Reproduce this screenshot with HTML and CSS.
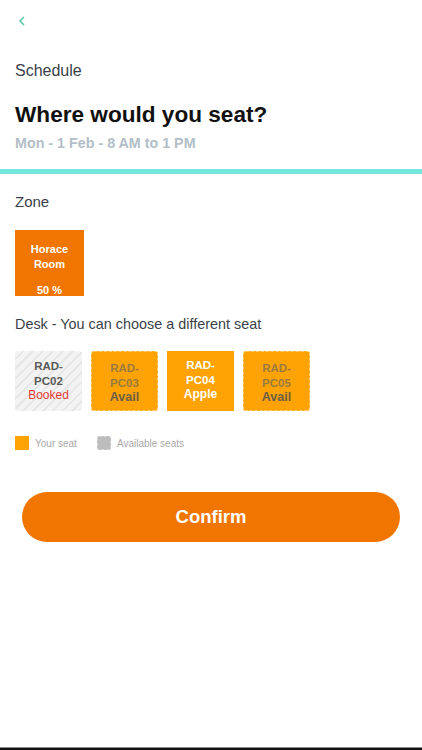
FILE: index.html
```html
<!DOCTYPE html>
<html>
<head>
<meta charset="utf-8">
<link rel="stylesheet" href="styles.css">
</head>
<body>
<div class="app">
  <header class="top">
    <div class="back">
      <svg width="8" height="10" viewBox="0 0 8 10"><path d="M6 1 L2 5 L6 9" fill="none" stroke="#5cc9ae" stroke-width="1.6"/></svg>
    </div>
    <div class="eyebrow">Schedule</div>
    <h1 class="title">Where would you seat?</h1>
    <div class="when">Mon - 1 Feb - 8 AM to 1 PM</div>
  </header>
  <div class="divider"></div>
  <main class="content">
    <div class="label">Zone</div>
    <div class="zone">
      <div class="zone-name">Horace<br>Room</div>
      <div class="zone-pct">50 %</div>
    </div>
    <div class="label desk-label">Desk - You can choose a different seat</div>
    <div class="seats">
      <div class="seat booked"><span>RAD-<br>PC02</span><span class="status">Booked</span></div>
      <div class="seat avail"><span>RAD-<br>PC03</span><span class="status">Avail</span></div>
      <div class="seat mine"><span>RAD-<br>PC04</span><span class="status">Apple</span></div>
      <div class="seat avail"><span>RAD-<br>PC05</span><span class="status">Avail</span></div>
    </div>
    <div class="legend">
      <div class="leg"><span class="sw sw-mine"></span>Your seat</div>
      <div class="leg"><span class="sw sw-avail"></span>Available seats</div>
    </div>
    <button class="confirm">Confirm</button>
  </main>
  <div class="bottom"></div>
</div>
</body>
</html>
```
FILE: styles.css
```css
* { box-sizing: border-box; }
html, body { margin: 0; padding: 0; background: #fff; }
body { font-family: "Liberation Sans", Arial, sans-serif; color: #333; }
.app { width: 422px; height: 750px; display: flex; flex-direction: column; position: relative; }
.top { padding: 15px 15px 0 15px; }
.back { height: 12px; padding-left: 3px; display: flex; align-items: flex-start; padding-top: 1px; }
.back svg { display: block; }
.eyebrow { margin-top: 35px; font-size: 16px; color: #3a3f4a; line-height: 18px; }
.title { margin: 22px 0 0 0; font-size: 22.6px; font-weight: bold; color: #111; line-height: 26px; }
.when { margin-top: 7px; font-size: 14.3px; font-weight: bold; color: #b3bec8; line-height: 16px; }
.divider { margin-top: 18px; height: 5px; background: #74e6da; }
.content { padding: 0 15px; flex: 1; display: flex; flex-direction: column; align-items: flex-start; }
.label { margin-top: 19px; font-size: 15px; color: #3a3f4a; line-height: 17px; }
.zone { margin-top: 20px; width: 69px; height: 66px; background: #f17601; color: #fff; font-weight: bold; font-size: 11px; text-align: center; display: flex; flex-direction: column; justify-content: space-between; padding: 12px 0 0 0; line-height: 15px; }
.zone-pct { line-height: 12px; }
.desk-label { margin-top: 20px; font-size: 14.4px; }
.seats { margin-top: 18px; display: flex; gap: 9px; }
.seat { width: 67px; height: 60px; border-radius: 3px; display: flex; flex-direction: column; align-items: center; justify-content: center; text-align: center; font-size: 11.5px; line-height: 14.5px; font-weight: bold; }
.seat .status { font-size: 12px; }
.seat.booked { background: repeating-linear-gradient(135deg, #f3f3f3 0 5px, #e6e6e6 5px 7px); color: #5a5a5a; font-weight: normal; font-size: 11.5px; }
.seat.booked span:first-child { font-weight: bold; }
.seat.booked .status { color: #e53935; font-weight: normal; }
.seat.avail { background: #ffa304; border: 1.5px dashed #ffd27a; color: #9a7b3c; padding-top: 4px; }
.seat.avail .status { color: #6e5f45; font-size: 12.5px; }
.seat.mine { background: #ffa304; color: #fff; border-radius: 0; padding-bottom: 2px; }
.seat.mine .status { font-size: 12px; }
.legend { margin-top: 25px; display: flex; gap: 20px; font-size: 10px; color: #a8a8a8; }
.leg { display: flex; align-items: center; gap: 6px; }
.sw { width: 14px; height: 14px; display: inline-block; }
.sw-mine { background: #ffa304; }
.sw-avail { background: #bdbdbd; border: 1px dashed #d8d8d8; border-radius: 2px; }
.confirm { margin: 42px 0 0 7px; width: 378px; height: 50px; border: none; border-radius: 25px; background: #f17601; color: #fff; font-family: "Liberation Sans", Arial, sans-serif; font-weight: bold; font-size: 18.5px; }
.bottom { height: 3px; background: #111; border-top: 1px solid #888; }
```
